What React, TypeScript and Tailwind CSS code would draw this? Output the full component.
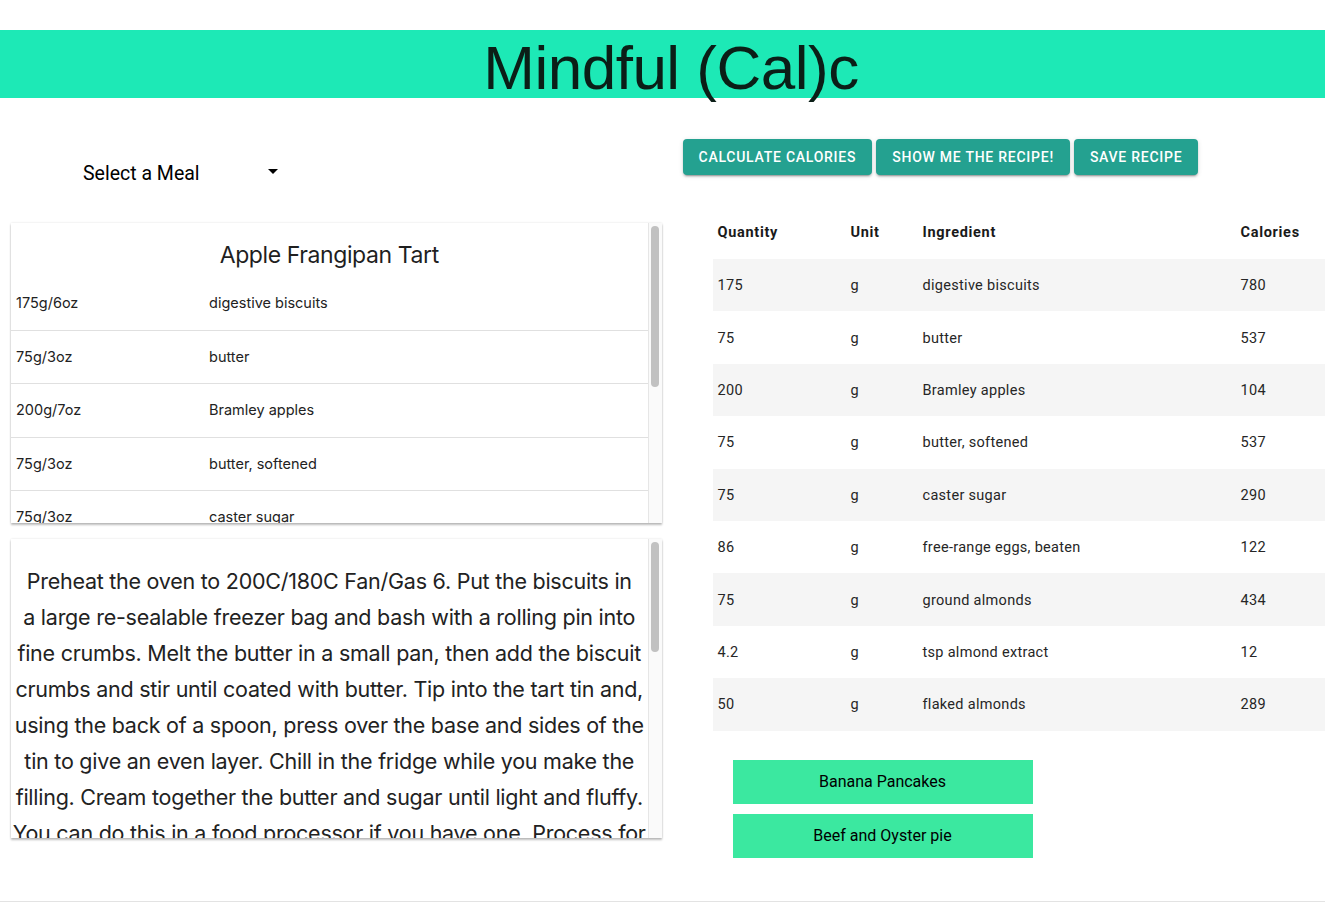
import React from 'react';

const recipeRows = [
  { qty: '175g/6oz', name: 'digestive biscuits' },
  { qty: '75g/3oz', name: 'butter' },
  { qty: '200g/7oz', name: 'Bramley apples' },
  { qty: '75g/3oz', name: 'butter, softened' },
  { qty: '75g/3oz', name: 'caster sugar' },
  { qty: '2', name: 'free-range eggs, beaten' },
];

const calorieRows = [
  { qty: '175', unit: 'g', name: 'digestive biscuits', cal: '780' },
  { qty: '75', unit: 'g', name: 'butter', cal: '537' },
  { qty: '200', unit: 'g', name: 'Bramley apples', cal: '104' },
  { qty: '75', unit: 'g', name: 'butter, softened', cal: '537' },
  { qty: '75', unit: 'g', name: 'caster sugar', cal: '290' },
  { qty: '86', unit: 'g', name: 'free-range eggs, beaten', cal: '122' },
  { qty: '75', unit: 'g', name: 'ground almonds', cal: '434' },
  { qty: '4.2', unit: 'g', name: 'tsp almond extract', cal: '12' },
  { qty: '50', unit: 'g', name: 'flaked almonds', cal: '289' },
];

// method text, broken the way the screenshot wraps it
const methodLines = [
  'Preheat the oven to 200C/180C Fan/Gas 6. Put the biscuits in',
  'a large re-sealable freezer bag and bash with a rolling pin into',
  'fine crumbs. Melt the butter in a small pan, then add the biscuit',
  'crumbs and stir until coated with butter. Tip into the tart tin and,',
  'using the back of a spoon, press over the base and sides of the',
  'tin to give an even layer. Chill in the fridge while you make the',
  'filling. Cream together the butter and sugar until light and fluffy.',
  'You can do this in a food processor if you have one. Process for',
  '1 min, then add the eggs and almond extract.',
];

// fake mac-style scrollbar so the cards look like the screenshot
const Scrollbar = ({ thumb }: { thumb: string }) => (
  <div className="w-[14px] shrink-0 bg-[#fafafa] border-l border-[#e6e6e6] pt-[3px] flex justify-center">
    <div className={`w-[8px] ${thumb} rounded-full bg-[#c1c1c1]`} />
  </div>
);

export default function App() {
  return (
    <div className="h-[903px] flex flex-col bg-white text-[#212121] font-['Roboto','Liberation_Sans',sans-serif] overflow-hidden">
      <header className="mt-[30px] h-[68px] bg-[#1de9b6] flex justify-center pl-[17px]">
        <h1 className="text-[62px] leading-[76px] text-[#0b1e17] font-['Liberation_Sans','Arial',sans-serif] tracking-[-0.5px]">
          Mindful (Cal)c
        </h1>
      </header>

      <main className="flex-1 grid grid-cols-2">
        {/* left column */}
        <div className="flex flex-col pl-[11px] pr-px">
          <div className="h-[125px] flex items-center pl-[72px] pt-[26px]">
            <div className="w-[195px] flex items-center justify-between">
              <span className="text-[19.5px] text-black">Select a Meal</span>
              <svg width="10" height="5" viewBox="0 0 10 5" className="-mt-1">
                <path d="M0 0 L10 0 L5 5 Z" fill="#000" />
              </svg>
            </div>
          </div>

          <div className="h-[300px] flex bg-white shadow-[0_2px_2px_rgba(0,0,0,0.25),0_0_2px_rgba(0,0,0,0.12)] font-['Inter','Roboto',sans-serif]">
            <div className="flex-1 overflow-hidden">
              <h2 className="h-[54px] pt-[17px] text-center text-[23px] leading-[30px] tracking-[-0.4px] text-[#1f1f1f]">
                Apple Frangipan Tart
              </h2>
              {recipeRows.map((r, i) => (
                <div key={i} className="h-[53.5px] flex items-center border-b border-[#e0e0e0] text-[14.5px] text-[#222]">
                  <div className="w-[198px] pl-[5px]">{r.qty}</div>
                  <div>{r.name}</div>
                </div>
              ))}
            </div>
            <Scrollbar thumb="h-[161px]" />
          </div>

          <div className="mt-[16px] h-[299px] flex bg-white shadow-[0_2px_2px_rgba(0,0,0,0.25),0_0_2px_rgba(0,0,0,0.12)] font-['Inter','Roboto',sans-serif]">
            <div className="flex-1 overflow-hidden">
              <p className="pt-[24px] text-center text-[21.5px] leading-[36px] tracking-[-0.25px] text-[#222] whitespace-nowrap">
                {methodLines.map((l, i) => (
                  <React.Fragment key={i}>
                    {l}
                    <br />
                  </React.Fragment>
                ))}
              </p>
            </div>
            <Scrollbar thumb="h-[110px]" />
          </div>
        </div>

        {/* right column */}
        <div className="flex flex-col pl-[20px]">
          <div className="pt-[41px] flex gap-[4px]">
            {['Calculate Calories', 'Show me the recipe!', 'Save Recipe'].map((b) => (
              <button
                key={b}
                className="h-[36px] px-[16px] rounded-[4px] bg-[#24a190] text-white text-[14px] font-medium uppercase tracking-[0.75px] shadow-[0_3px_1px_-2px_rgba(0,0,0,0.2),0_2px_2px_0_rgba(0,0,0,0.14),0_1px_5px_0_rgba(0,0,0,0.12)]"
              >
                {b}
              </button>
            ))}
          </div>

          <div className="mt-[31px] ml-[30px] w-[640px] text-[14.5px] tracking-[0.3px]">
            <div className="h-[53px] flex items-center font-bold text-[#1a1a1a] tracking-[0.7px]">
              <div className="w-[133px] pl-[5px]">Quantity</div>
              <div className="w-[72px] pl-[5px]">Unit</div>
              <div className="w-[318px] pl-[5px]">Ingredient</div>
              <div className="pl-[5px]">Calories</div>
            </div>
            {calorieRows.map((r, i) => (
              <div
                key={i}
                className={`h-[52.4px] pt-[2px] flex items-center text-[#262626] ${i % 2 === 0 ? 'bg-[#f5f5f5]' : 'bg-white'}`}
              >
                <div className="w-[133px] pl-[5px]">{r.qty}</div>
                <div className="w-[72px] pl-[5px]">{r.unit}</div>
                <div className="w-[318px] pl-[5px]">{r.name}</div>
                <div className="pl-[5px]">{r.cal}</div>
              </div>
            ))}
          </div>

          <div className="mt-[29px] ml-[50px] flex flex-col gap-[10px]">
            {['Banana Pancakes', 'Beef and Oyster pie'].map((m) => (
              <button key={m} className="w-[300px] h-[44px] bg-[#3be8a0] text-black text-[16px]">
                {m}
              </button>
            ))}
          </div>
        </div>
      </main>

      <div className="h-[2px] border-t border-[#e3e3e3]" />
    </div>
  );
}
